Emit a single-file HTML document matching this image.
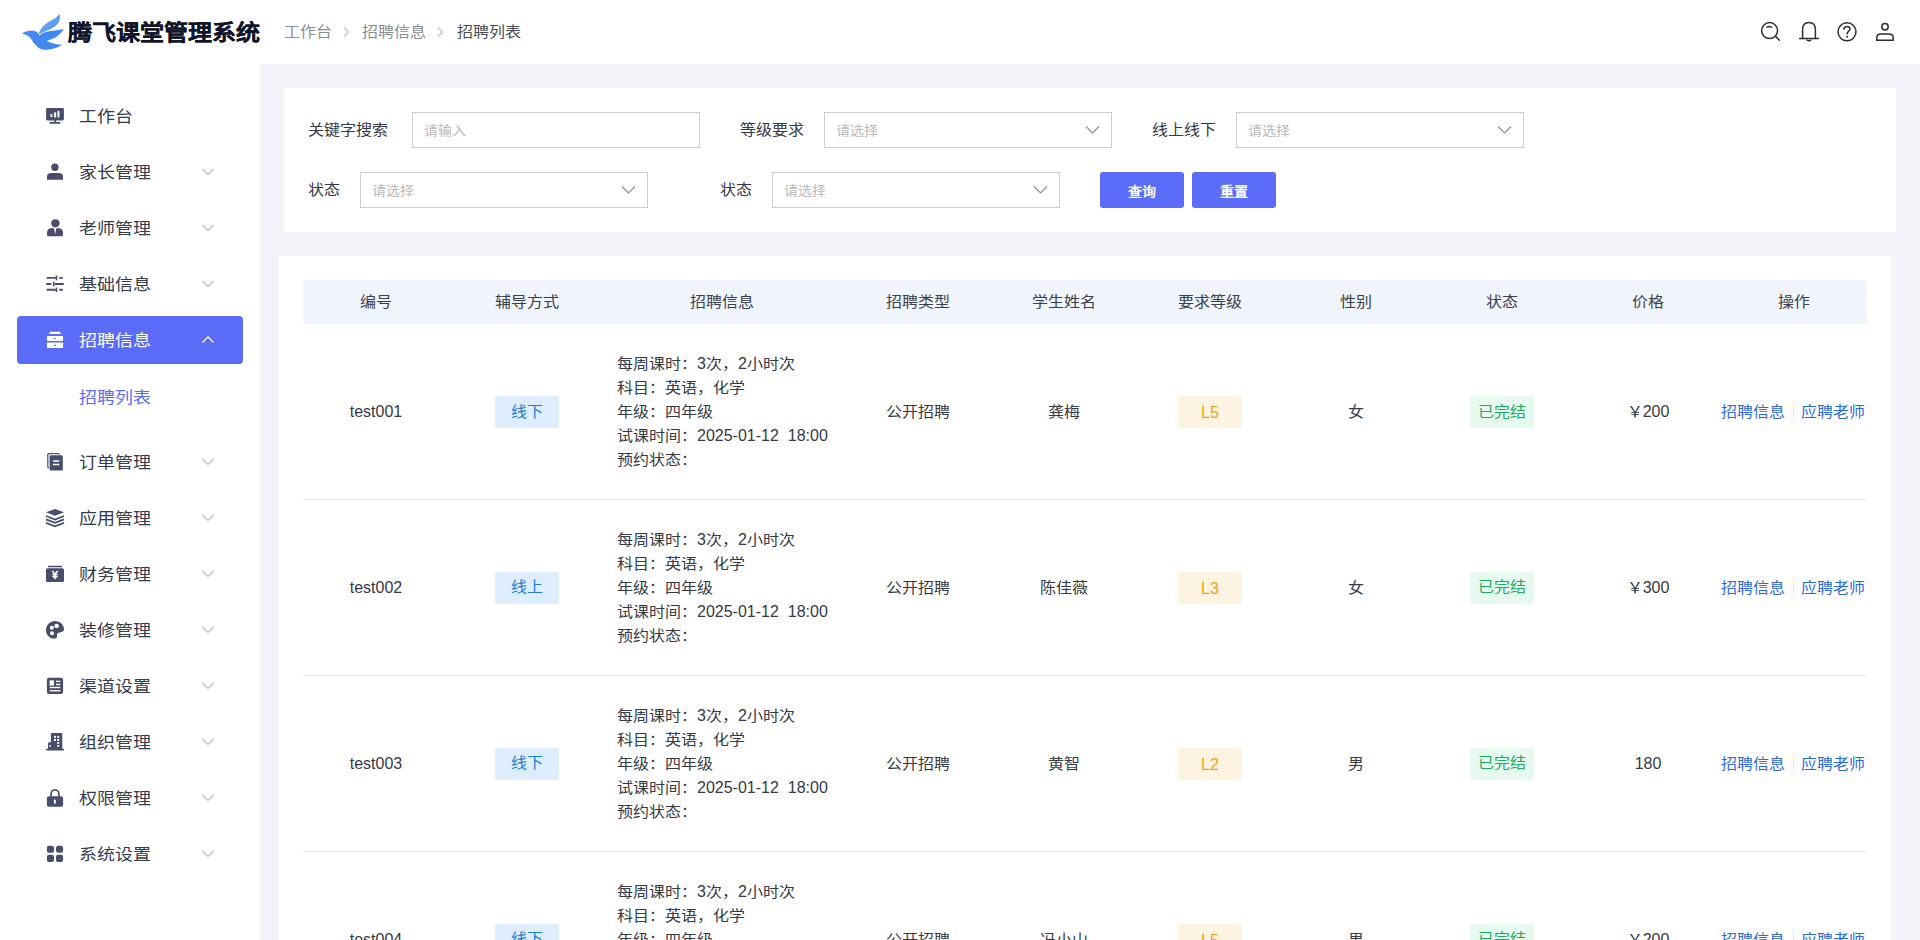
<!DOCTYPE html>
<html lang="zh-CN">
<head>
<meta charset="utf-8">
<style>
*{margin:0;padding:0;box-sizing:border-box;}
html,body{width:1920px;height:940px;overflow:hidden;background:#fff;}
body{font-family:"Liberation Sans",sans-serif;color:#333;position:relative;}
svg{position:absolute;overflow:visible;}
#header{position:absolute;left:0;top:0;width:1920px;height:64px;background:#fff;}
#title{position:absolute;transform:scaleY(0.9);left:68px;top:15px;font-size:24px;line-height:36px;font-weight:bold;color:#10152a;-webkit-text-stroke:0.25px #10152a;white-space:nowrap;}
.bc{position:absolute;transform:scaleY(0.9);top:20px;font-size:16px;line-height:24px;color:#8a8d94;white-space:nowrap;}
#sidebar{position:absolute;left:0;top:64px;width:260px;height:876px;background:#fff;}
.tx{position:absolute;transform:scaleY(0.9);left:78.5px;margin-top:1px;font-size:18px;line-height:28px;color:#363b4a;white-space:nowrap;}
#main{position:absolute;left:260px;top:64px;width:1660px;height:876px;background:#f3f4f9;}
.card{position:absolute;background:#fff;}
.lbl{position:absolute;transform:scaleY(0.9);margin-top:1px;font-size:16px;line-height:24px;color:#343847;white-space:nowrap;}
.inp{position:absolute;height:36px;border:1px solid #cfcfcf;background:#fff;}
.inp>span{position:absolute;transform:scaleY(0.9);left:11px;top:7px;font-size:14px;line-height:20px;color:#b8b8b8;white-space:nowrap;}
.btn{position:absolute;top:172px;width:84px;height:36px;background:#5b6cf9;border-radius:3px;}
.btn>span{position:absolute;left:0;top:8.5px;width:84px;color:#fff;font-size:14px;line-height:20px;text-align:center;font-weight:600;transform:scaleY(0.9);}
.th{position:absolute;top:280px;left:303px;width:1564px;height:44px;background:#f0f4fd;}
.hc{position:absolute;transform:scaleY(0.9);top:290px;width:146px;margin-left:-73px;text-align:center;font-size:16px;line-height:24px;color:#3a3f4b;white-space:nowrap;}
.c{position:absolute;transform:scaleY(0.9);width:200px;margin-left:-100px;text-align:center;font-size:16px;line-height:24px;color:#363a45;white-space:nowrap;}
.tag{position:absolute;width:64px;height:32px;margin-left:-32px;border-radius:2px;font-size:16px;line-height:32px;text-align:center;white-space:nowrap;}
.tag>span{display:block;transform:scaleY(0.9);}
.t-blue{background:#deedfc;color:#1c7ed6;}
.t-gold{background:#fdf3e1;color:#e8a317;}
.t-gold .lat{transform:translateY(2px) scaleY(1.2);}
.t-green{background:#e6f9ef;color:#1fa863;}
.info{position:absolute;transform:scaleY(0.9);left:617px;font-size:16px;line-height:24px;color:#363a45;white-space:nowrap;}
.rowline{position:absolute;left:303px;width:1564px;height:1px;background:#ebebeb;}
.lnk{position:absolute;transform:scaleY(0.9);font-size:16px;line-height:24px;color:#2c6bd3;white-space:nowrap;}
.lat{display:inline-block;transform:translateY(1px) scaleY(1.2);transform-origin:50% 70%;}
.sep{position:absolute;width:1px;height:16px;background:#e9e9e9;}
</style>
</head>
<body>
<div id="header">
<svg style="left:0;top:0" width="1" height="1">
<defs><linearGradient id="bg1" x1="0" y1="0" x2="1" y2="1"><stop offset="0" stop-color="#5aa0f6"/><stop offset="1" stop-color="#3b80ea"/></linearGradient></defs>
<g transform="translate(22,13)">
<path fill="#4189ee" d="M0.3,20.7 C2,18.6 8,17.2 12.3,18.1 C14.5,18.7 16.2,20.2 17.6,22.6 C19.6,20 23.5,18.6 31,17.8 C36,17.1 40,16.6 41.6,16 C40.6,18.6 37,22.6 32.8,24.8 C30,26.3 27,27.2 24.6,27.7 C27.5,29.5 33,31.3 39.8,31.8 C37,34.3 30,36.9 22.3,36.8 C17,36.4 12.3,31.2 9.4,26.2 C7.6,23.2 4.5,21.4 0.3,20.7 Z"/>
<path fill="#5d9ff5" d="M16.9,21.2 C17.6,17 21,12.6 25.8,9.6 C30,7 35,5 37.5,0.8 C38.6,4 37.8,9 35.2,11.4 C32,14.5 27,16.6 20.6,19.6 C19.2,20.3 18,21 16.9,21.6 Z"/>
</g></svg>
<div id="title">腾飞课堂管理系统</div>
<div class="bc" style="left:284px;">工作台</div>
<div class="bc" style="left:362px;">招聘信息</div>
<div class="bc" style="left:457px;color:#4a4e57;">招聘列表</div>
<svg style="left:0;top:0" width="1" height="1"><path d="M344,27.5 L348.5,32 L344,36.5" fill="none" stroke="#b9bcc2" stroke-width="1.1"/></svg>
<svg style="left:0;top:0" width="1" height="1"><path d="M438,27.5 L442.5,32 L438,36.5" fill="none" stroke="#b9bcc2" stroke-width="1.1"/></svg>
<svg style="left:0;top:0" width="1" height="1" fill="none" stroke="#2a2e3b" stroke-width="1.5" stroke-linecap="round">
<circle cx="1769.6" cy="30.6" r="8"/>
<path d="M1775.8,36.6 L1779.4,40.2"/>
<path d="M1767,27.3 Q1769.3,25.6 1771.6,27.3" stroke-width="1.4"/>
<path d="M1802.6,38.4 V29.6 C1802.6,25.1 1805.2,22.6 1809,22.6 C1812.8,22.6 1815.4,25.1 1815.4,29.6 V38.4"/>
<path d="M1799.6,38.4 H1818.4"/>
<path d="M1807,40 Q1809,41.8 1811,40" stroke-width="1.4"/>
<circle cx="1847" cy="31.8" r="9"/>
<path d="M1844,29.3 C1844,27.4 1845.3,26.5 1847,26.5 C1848.7,26.5 1850,27.5 1850,29.1 C1850,31 1847.1,31.4 1847.1,34" stroke-width="1.5"/>
<circle cx="1885" cy="26.7" r="3.2"/>
<path d="M1876.8,40.2 V37.6 C1876.8,35.4 1878.6,34 1881,34 H1889 C1891.4,34 1893.2,35.4 1893.2,37.6 V40.2 Z"/>
</svg>
<svg style="left:0;top:0" width="1" height="1"><circle cx="1847.1" cy="36.8" r="1" fill="#2a2e3b"/></svg>
</div>
<div id="sidebar"></div>
<div style="position:absolute;left:17px;top:316px;width:226px;height:48px;background:#5b6cf9;border-radius:4px;"></div>
<div class="tx" style="top:102px;color:#363b4a;">工作台</div>
<div class="tx" style="top:158px;color:#363b4a;">家长管理</div>
<svg style="left:0;top:0" width="1" height="1"><path d="M202.5,169 L208,174.5 L213.5,169" fill="none" stroke="#b4b7bf" stroke-width="1.1"/></svg>
<div class="tx" style="top:214px;color:#363b4a;">老师管理</div>
<svg style="left:0;top:0" width="1" height="1"><path d="M202.5,225 L208,230.5 L213.5,225" fill="none" stroke="#b4b7bf" stroke-width="1.1"/></svg>
<div class="tx" style="top:270px;color:#363b4a;">基础信息</div>
<svg style="left:0;top:0" width="1" height="1"><path d="M202.5,281 L208,286.5 L213.5,281" fill="none" stroke="#b4b7bf" stroke-width="1.1"/></svg>
<div class="tx" style="top:326px;color:#fff;">招聘信息</div>
<svg style="left:0;top:0" width="1" height="1"><path d="M202.5,342.5 L208,337 L213.5,342.5" fill="none" stroke="#fff" stroke-width="1.3"/></svg>
<div class="tx" style="top:448px;color:#363b4a;">订单管理</div>
<svg style="left:0;top:0" width="1" height="1"><path d="M202.5,459 L208,464.5 L213.5,459" fill="none" stroke="#b4b7bf" stroke-width="1.1"/></svg>
<div class="tx" style="top:504px;color:#363b4a;">应用管理</div>
<svg style="left:0;top:0" width="1" height="1"><path d="M202.5,515 L208,520.5 L213.5,515" fill="none" stroke="#b4b7bf" stroke-width="1.1"/></svg>
<div class="tx" style="top:560px;color:#363b4a;">财务管理</div>
<svg style="left:0;top:0" width="1" height="1"><path d="M202.5,571 L208,576.5 L213.5,571" fill="none" stroke="#b4b7bf" stroke-width="1.1"/></svg>
<div class="tx" style="top:616px;color:#363b4a;">装修管理</div>
<svg style="left:0;top:0" width="1" height="1"><path d="M202.5,627 L208,632.5 L213.5,627" fill="none" stroke="#b4b7bf" stroke-width="1.1"/></svg>
<div class="tx" style="top:672px;color:#363b4a;">渠道设置</div>
<svg style="left:0;top:0" width="1" height="1"><path d="M202.5,683 L208,688.5 L213.5,683" fill="none" stroke="#b4b7bf" stroke-width="1.1"/></svg>
<div class="tx" style="top:728px;color:#363b4a;">组织管理</div>
<svg style="left:0;top:0" width="1" height="1"><path d="M202.5,739 L208,744.5 L213.5,739" fill="none" stroke="#b4b7bf" stroke-width="1.1"/></svg>
<div class="tx" style="top:784px;color:#363b4a;">权限管理</div>
<svg style="left:0;top:0" width="1" height="1"><path d="M202.5,795 L208,800.5 L213.5,795" fill="none" stroke="#b4b7bf" stroke-width="1.1"/></svg>
<div class="tx" style="top:840px;color:#363b4a;">系统设置</div>
<svg style="left:0;top:0" width="1" height="1"><path d="M202.5,851 L208,856.5 L213.5,851" fill="none" stroke="#b4b7bf" stroke-width="1.1"/></svg>
<div class="tx" style="top:383px;color:#5b6cf9;">招聘列表</div>
<svg style="left:0;top:0" width="1" height="1" fill="#474d6b">
<rect x="46.1" y="108" width="17.8" height="12.4" rx="1.3"/>
<rect x="50.5" y="114" width="1.9" height="3.3" rx="0.8" fill="#fff"/>
<rect x="54" y="112.3" width="2.2" height="5.2" rx="0.9" fill="#fff"/>
<rect x="57.5" y="110.8" width="2" height="6.7" rx="0.9" fill="#fff"/>
<rect x="54.3" y="120" width="1.8" height="2.4"/>
<rect x="49.3" y="122" width="11.2" height="1.7" rx="0.8"/>

<circle cx="54.9" cy="167.2" r="3.7"/>
<path d="M47,179.8 V176 C47,174.1 49,172.9 51.5,172.9 H58.5 C61,172.9 63,174.1 63,176 V179.8 Z"/>

<path d="M51.2,223.6 C51.2,220.6 53,219.3 55.5,219.3 C58,219.3 59.6,220.6 59.6,223.3 C59.6,225.6 57.8,227.4 55.4,227.4 C53,227.4 51.2,225.8 51.2,223.6 Z"/>
<path d="M47,233 C47,230.2 48.8,228.3 51,228.3 H54.1 L55.2,234.4 L56.3,228.3 H59 C61.3,228.3 63,230.2 63,233 V234.4 C63,235.6 62.2,236.3 61,236.3 H49 C47.8,236.3 47,235.6 47,234.4 Z"/>

<g stroke="#474d6b" stroke-width="1.9" stroke-linecap="butt" fill="none">
<path d="M46.7,277.9 H55.8 M59.2,277.9 H62.8 M46.2,284 H51.3 M54.6,284 H63.8 M46.7,289.7 H55.8 M59.2,289.7 H62.8"/>
<path d="M56.5,275.6 V280.3 M53.7,281.6 V286.2 M56.5,287.4 V292" stroke-width="1.6"/>
</g>

<path d="M50.2,331.7 H59.8 L61.2,334 H48.8 Z" fill="#fff"/>
<rect x="46.9" y="336" width="16.2" height="5" rx="0.8" fill="#fff"/>
<rect x="46.9" y="342.5" width="16.2" height="5.5" rx="0.8" fill="#fff"/>
<rect x="53.4" y="338" width="2.7" height="1.1" rx="0.5" fill="#5b6cf9"/>
<rect x="54" y="344.7" width="2" height="1.2" rx="0.5" fill="#5b6cf9"/>

<rect x="47.2" y="453" width="12.6" height="15.3" rx="1.5"/>
<rect x="48.4" y="454.3" width="10.6" height="13" rx="0.8" fill="#fff"/>
<rect x="49.1" y="454.8" width="14.2" height="16.3" rx="1.5" fill="#fff"/>
<rect x="49.6" y="455.3" width="13.2" height="15.3" rx="1.3"/>
<rect x="52.9" y="460.3" width="6.4" height="1.5" rx="0.5" fill="#fff"/>
<rect x="52.9" y="463.8" width="6.4" height="1.5" rx="0.5" fill="#fff"/>

<path d="M46,512.3 L55,508.9 L64,512.3 L55,515.8 Z"/>
<path d="M46,516 L55,519.5 L64,516 M46,519.4 L55,522.9 L64,519.4 M46,522.8 L55,526.3 L64,522.8" fill="none" stroke="#474d6b" stroke-width="1.8"/>

<rect x="48" y="565.7" width="14" height="1.6" rx="0.6"/>
<rect x="46" y="568.2" width="18" height="13.8" rx="1.6"/>
<path d="M52.3,570.9 L55,574.2 L57.7,570.9 M55,574.2 V579.2 M52.4,574.8 H57.6 M52.4,576.8 H57.6" fill="none" stroke="#fff" stroke-width="1.6"/>

<path d="M63.8,630.6 C62.5,632.6 58.8,632.2 57.5,633.6 C56.5,634.8 57.6,636.4 56.8,637.6 C56,638.7 54.5,638.7 53.2,638.6 C49,638.1 46,634.6 46,630 C46,625.1 50,621 55,621 C60,621 64,624.8 64,629.6 Z"/>
<circle cx="51.8" cy="627.8" r="2" fill="#fff"/>
<circle cx="56.6" cy="625.9" r="2.2" fill="#fff"/>
<circle cx="52" cy="633.2" r="2" fill="#fff"/>

<rect x="46.9" y="677.8" width="16.2" height="16.2" rx="2.2"/>
<rect x="49.6" y="680.3" width="4.4" height="5.3" fill="#fff"/>
<rect x="56" y="680.7" width="4.3" height="1.4" fill="#fff"/>
<rect x="56" y="683.8" width="4.3" height="1.4" fill="#fff"/>
<rect x="49.8" y="686.8" width="10.5" height="1.4" fill="#fff"/>
<rect x="49.8" y="690" width="10.5" height="1.4" fill="#fff"/>

<rect x="46" y="748.8" width="18" height="1.6" rx="0.6"/>
<rect x="50.9" y="733" width="11.4" height="16.5" rx="0.9"/>
<path d="M48,749.6 V743.6 C48,742.6 48.8,742.2 49.5,742.2 H51 V749.6 Z"/>
<g fill="#fff"><rect x="54" y="735.9" width="2" height="1.9"/><rect x="57.2" y="735.9" width="2" height="1.9"/>
<rect x="54" y="739" width="2" height="2"/><rect x="57.2" y="739" width="2" height="2"/>
<rect x="57.2" y="742" width="2" height="1.9"/><rect x="57.2" y="745" width="2" height="1.7"/>
<rect x="49.3" y="745.1" width="1.6" height="1.6"/></g>

<path d="M51,796.6 V794.4 C51,791.7 52.8,789.9 55,789.9 C57.2,789.9 59,791.7 59,794.4 V796.6" fill="none" stroke="#474d6b" stroke-width="1.7"/>
<rect x="46.9" y="796.2" width="16.2" height="10.5" rx="1.8"/>
<rect x="53.9" y="799.6" width="1.9" height="4.1" rx="0.6" fill="#fff"/>

<rect x="46.9" y="845.7" width="7.1" height="7.1" rx="2"/>
<rect x="56" y="845.7" width="7.1" height="7.1" rx="2.4"/>
<rect x="46.9" y="854.7" width="7.1" height="7.2" rx="2"/>
<rect x="56" y="854.7" width="7.1" height="7.2" rx="2"/>
</svg>
<div id="main"></div>
<div class="card" style="left:284px;top:88px;width:1612px;height:144px;"></div>
<div class="lbl" style="left:308px;top:118px;">关键字搜索</div>
<div class="inp" style="left:412px;top:112px;width:288px;"><span>请输入</span></div>
<div class="lbl" style="left:740px;top:118px;">等级要求</div>
<div class="inp" style="left:824px;top:112px;width:288px;"><span>请选择</span></div><svg style="left:0;top:0" width="1" height="1"><path d="M1086.0,126.5 L1092.5,133 L1099.0,126.5" fill="none" stroke="#8e8f93" stroke-width="1.2"/></svg>
<div class="lbl" style="left:1152px;top:118px;">线上线下</div>
<div class="inp" style="left:1236px;top:112px;width:288px;"><span>请选择</span></div><svg style="left:0;top:0" width="1" height="1"><path d="M1498.0,126.5 L1504.5,133 L1511.0,126.5" fill="none" stroke="#8e8f93" stroke-width="1.2"/></svg>
<div class="lbl" style="left:308px;top:178px;">状态</div>
<div class="inp" style="left:360px;top:172px;width:288px;"><span>请选择</span></div><svg style="left:0;top:0" width="1" height="1"><path d="M622.0,186.5 L628.5,193 L635.0,186.5" fill="none" stroke="#8e8f93" stroke-width="1.2"/></svg>
<div class="lbl" style="left:720px;top:178px;">状态</div>
<div class="inp" style="left:772px;top:172px;width:288px;"><span>请选择</span></div><svg style="left:0;top:0" width="1" height="1"><path d="M1034.0,186.5 L1040.5,193 L1047.0,186.5" fill="none" stroke="#8e8f93" stroke-width="1.2"/></svg>
<div class="btn" style="left:1100px;"><span>查询</span></div>
<div class="btn" style="left:1192px;"><span>重置</span></div>
<div class="card" style="left:279px;top:256px;width:1612px;height:700px;"></div>
<div class="th"></div>
<div class="hc" style="left:376px;">编号</div>
<div class="hc" style="left:527px;">辅导方式</div>
<div class="hc" style="left:722px;">招聘信息</div>
<div class="hc" style="left:918px;">招聘类型</div>
<div class="hc" style="left:1064px;">学生姓名</div>
<div class="hc" style="left:1210px;">要求等级</div>
<div class="hc" style="left:1356px;">性别</div>
<div class="hc" style="left:1502px;">状态</div>
<div class="hc" style="left:1648px;">价格</div>
<div class="hc" style="left:1794px;">操作</div>
<div class="c" style="left:376px;top:400px;"><span class="lat">test001</span></div>
<div class="tag t-blue" style="left:527px;top:396px;"><span>线下</span></div>
<div class="info" style="top:352px;">每周课时：<span class="lat">3</span>次，<span class="lat">2</span>小时次</div>
<div class="info" style="top:376px;">科目：英语，化学</div>
<div class="info" style="top:400px;">年级：四年级</div>
<div class="info" style="top:424px;">试课时间：<span class="lat">2025-01-12</span>&nbsp;&nbsp;<span class="lat">18:00</span></div>
<div class="info" style="top:448px;">预约状态：</div>
<div class="c" style="left:918px;top:400px;">公开招聘</div>
<div class="c" style="left:1064px;top:400px;">龚梅</div>
<div class="tag t-gold" style="left:1210px;top:396px;"><span><span class="lat">L5</span></span></div>
<div class="c" style="left:1356px;top:400px;">女</div>
<div class="tag t-green" style="left:1502px;top:396px;"><span>已完结</span></div>
<div class="c" style="left:1648px;top:400px;">￥<span class="lat">200</span></div>
<div class="lnk" style="left:1721px;top:400px;">招聘信息</div>
<div class="sep" style="left:1793px;top:404px;"></div>
<div class="lnk" style="left:1801px;top:400px;">应聘老师</div>
<div class="rowline" style="top:499px;"></div>
<div class="c" style="left:376px;top:576px;"><span class="lat">test002</span></div>
<div class="tag t-blue" style="left:527px;top:572px;"><span>线上</span></div>
<div class="info" style="top:528px;">每周课时：<span class="lat">3</span>次，<span class="lat">2</span>小时次</div>
<div class="info" style="top:552px;">科目：英语，化学</div>
<div class="info" style="top:576px;">年级：四年级</div>
<div class="info" style="top:600px;">试课时间：<span class="lat">2025-01-12</span>&nbsp;&nbsp;<span class="lat">18:00</span></div>
<div class="info" style="top:624px;">预约状态：</div>
<div class="c" style="left:918px;top:576px;">公开招聘</div>
<div class="c" style="left:1064px;top:576px;">陈佳薇</div>
<div class="tag t-gold" style="left:1210px;top:572px;"><span><span class="lat">L3</span></span></div>
<div class="c" style="left:1356px;top:576px;">女</div>
<div class="tag t-green" style="left:1502px;top:572px;"><span>已完结</span></div>
<div class="c" style="left:1648px;top:576px;">￥<span class="lat">300</span></div>
<div class="lnk" style="left:1721px;top:576px;">招聘信息</div>
<div class="sep" style="left:1793px;top:580px;"></div>
<div class="lnk" style="left:1801px;top:576px;">应聘老师</div>
<div class="rowline" style="top:675px;"></div>
<div class="c" style="left:376px;top:752px;"><span class="lat">test003</span></div>
<div class="tag t-blue" style="left:527px;top:748px;"><span>线下</span></div>
<div class="info" style="top:704px;">每周课时：<span class="lat">3</span>次，<span class="lat">2</span>小时次</div>
<div class="info" style="top:728px;">科目：英语，化学</div>
<div class="info" style="top:752px;">年级：四年级</div>
<div class="info" style="top:776px;">试课时间：<span class="lat">2025-01-12</span>&nbsp;&nbsp;<span class="lat">18:00</span></div>
<div class="info" style="top:800px;">预约状态：</div>
<div class="c" style="left:918px;top:752px;">公开招聘</div>
<div class="c" style="left:1064px;top:752px;">黄智</div>
<div class="tag t-gold" style="left:1210px;top:748px;"><span><span class="lat">L2</span></span></div>
<div class="c" style="left:1356px;top:752px;">男</div>
<div class="tag t-green" style="left:1502px;top:748px;"><span>已完结</span></div>
<div class="c" style="left:1648px;top:752px;"><span class="lat">180</span></div>
<div class="lnk" style="left:1721px;top:752px;">招聘信息</div>
<div class="sep" style="left:1793px;top:756px;"></div>
<div class="lnk" style="left:1801px;top:752px;">应聘老师</div>
<div class="rowline" style="top:851px;"></div>
<div class="c" style="left:376px;top:928px;"><span class="lat">test004</span></div>
<div class="tag t-blue" style="left:527px;top:924px;"><span>线下</span></div>
<div class="info" style="top:880px;">每周课时：<span class="lat">3</span>次，<span class="lat">2</span>小时次</div>
<div class="info" style="top:904px;">科目：英语，化学</div>
<div class="info" style="top:928px;">年级：四年级</div>
<div class="info" style="top:952px;">试课时间：<span class="lat">2025-01-12</span>&nbsp;&nbsp;<span class="lat">18:00</span></div>
<div class="info" style="top:976px;">预约状态：</div>
<div class="c" style="left:918px;top:928px;">公开招聘</div>
<div class="c" style="left:1064px;top:928px;">冯小山</div>
<div class="tag t-gold" style="left:1210px;top:924px;"><span><span class="lat">L5</span></span></div>
<div class="c" style="left:1356px;top:928px;">男</div>
<div class="tag t-green" style="left:1502px;top:924px;"><span>已完结</span></div>
<div class="c" style="left:1648px;top:928px;">￥<span class="lat">200</span></div>
<div class="lnk" style="left:1721px;top:928px;">招聘信息</div>
<div class="sep" style="left:1793px;top:932px;"></div>
<div class="lnk" style="left:1801px;top:928px;">应聘老师</div>
<div class="rowline" style="top:1027px;"></div>
</body>
</html>
